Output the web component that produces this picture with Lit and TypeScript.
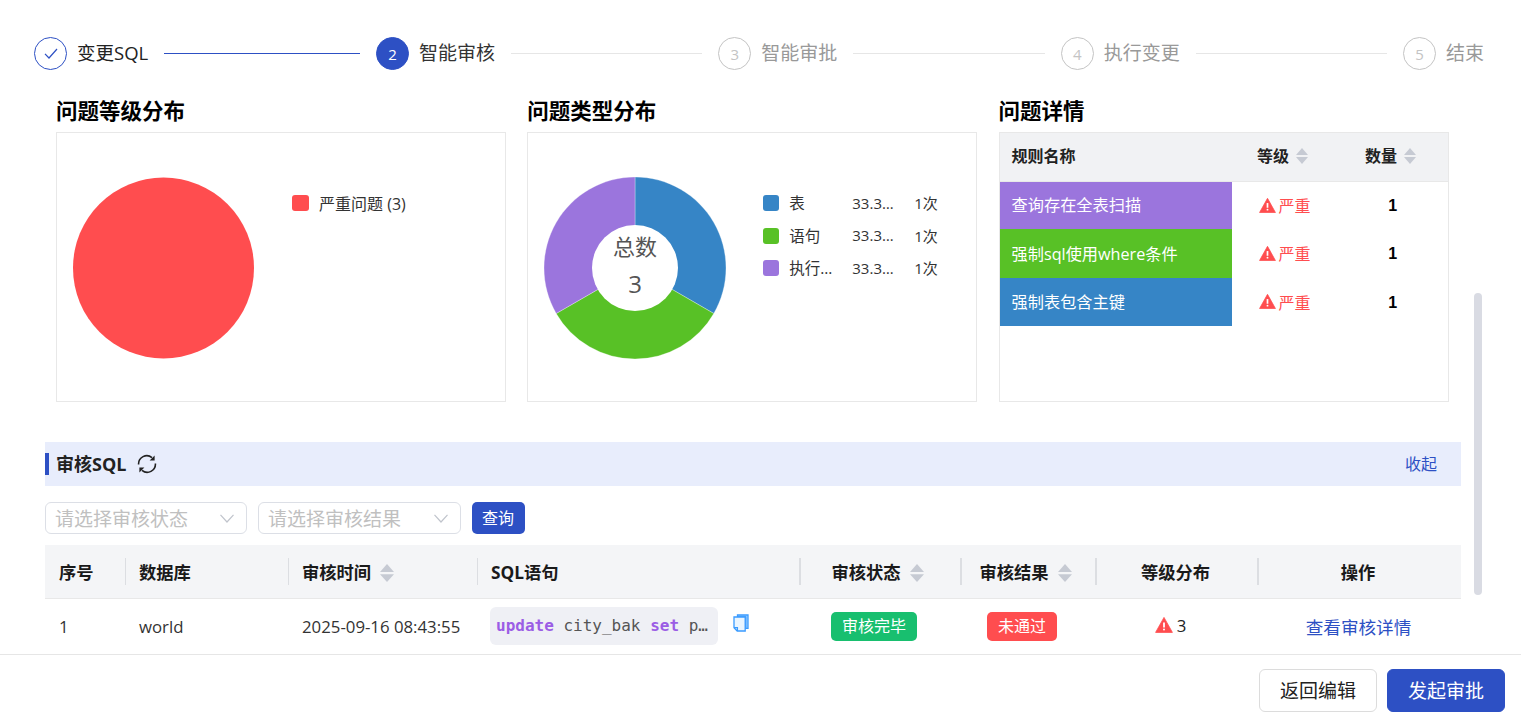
import { css, html, svg, LitElement } from "lit";
import { customElement } from "lit/decorators.js";

const BLUE = "#3685c6";
const GREEN = "#58c126";
const PURPLE = "#9b75dd";
const RED = "#ff4d4f";

const steps = [
  { label: "变更SQL", state: "done" },
  { label: "智能审核", state: "active" },
  { label: "智能审批", state: "todo" },
  { label: "执行变更", state: "todo" },
  { label: "结束", state: "todo" },
];

const typeLegend = [
  { name: "表", color: BLUE },
  { name: "语句", color: GREEN },
  { name: "执行计划", color: PURPLE },
];

const rules = [
  { name: "查询存在全表扫描", color: PURPLE },
  { name: "强制sql使用where条件", color: GREEN },
  { name: "强制表包含主键", color: BLUE },
];

const warnIcon = (size: number) => html`
  <svg class="warn" width=${size} height=${size} viewBox="0 0 18 18">
    <path d="M9 1.4 17.4 16.4H.6Z" fill="#ff4d4f" stroke="#ff4d4f" stroke-width=".8" stroke-linejoin="round" />
    <path d="M9 6.4v5" stroke="#fff" stroke-width="1.8" />
    <circle cx="9" cy="13.4" r="1" fill="#fff" />
  </svg>
`;

const sortIcon = () => html`<svg class="sort" viewBox="0 0 14 16" preserveAspectRatio="none">
    <path d="M7 0 14 7H0Z" fill="#c6cad3" />
    <path d="M7 16 0 9H14Z" fill="#c6cad3" />
  </svg>`;

const chevron = () => html`
  <svg width="14" height="9" viewBox="0 0 14 9" fill="none">
    <path d="M.5.8 7 8 13.5.8" stroke="#c0c4cc" stroke-width="1.2" />
  </svg>
`;

// clockwise slice of the donut, angles in degrees from twelve o'clock
function slice(from: number, to: number, color: string) {
  const r = 91;
  const rad = (deg: number) => ((deg - 90) * Math.PI) / 180;
  const x1 = 91 + r * Math.cos(rad(from));
  const y1 = 91 + r * Math.sin(rad(from));
  const x2 = 91 + r * Math.cos(rad(to));
  const y2 = 91 + r * Math.sin(rad(to));
  return svg`<path d="M91 91L${x1} ${y1}A${r} ${r} 0 0 1 ${x2} ${y2}Z" fill=${color} stroke="#fff" stroke-width=".3" />`;
}

@customElement("app-root")
export class AppRoot extends LitElement {
  renderStep(step: { label: string; state: string }, i: number) {
    return html`
      ${i > 0
        ? html`<span class="line ${step.state === "todo" ? "" : "on"}"></span>`
        : ""}
      <div class="step ${step.state}">
        <span class="dot">
          ${step.state === "done"
            ? html`<svg width="14" height="12" viewBox="0 0 14 12" fill="none">
                <path d="M1 5.8 5 10 13 1" stroke="#2d50c4" stroke-width="1.2" />
              </svg>`
            : i + 1}
        </span>
        <span class="step-label">${step.label}</span>
      </div>
    `;
  }

  renderCharts() {
    return html`
      <div class="charts">
        <div>
          <h3>问题等级分布</h3>
          <div class="box chart">
            <svg width="182" height="182" viewBox="0 0 182 182">
              <circle cx="90.5" cy="91" r="90.5" fill="#ff4d4f" />
            </svg>
            <div class="legend">
              <div class="legend-row">
                <i class="swatch wide" style="background:${RED}"></i>
                <span>严重问题 (3)</span>
              </div>
            </div>
          </div>
        </div>
        <div>
          <h3>问题类型分布</h3>
          <div class="box chart">
            <svg width="182" height="182" viewBox="0 0 182 182">
              ${slice(0, 120, BLUE)} ${slice(120, 240, GREEN)} ${slice(240, 360, PURPLE)}
              <circle cx="91" cy="91" r="43" fill="#fff" />
              <text x="91" y="78" class="total-label" text-anchor="middle">总数</text>
              <text x="91" y="116" class="total-num" text-anchor="middle">3</text>
            </svg>
            <div class="legend">
              ${typeLegend.map(
                (l) => html`
                  <div class="legend-row">
                    <i class="swatch" style="background:${l.color}"></i>
                    <span class="cut name">${l.name}</span>
                    <span class="cut pct">33.33%</span>
                    <span class="times">1次</span>
                  </div>
                `
              )}
            </div>
          </div>
        </div>
        <div>
          <h3>问题详情</h3>
          <div class="box">
            <table class="rules">
              <colgroup>
                <col style="width:232px" />
                <col style="width:106px" />
                <col />
              </colgroup>
              <thead>
                <tr>
                  <th class="left">规则名称</th>
                  <th>等级${sortIcon()}</th>
                  <th>数量${sortIcon()}</th>
                </tr>
              </thead>
              <tbody>
                ${rules.map(
                  (r) => html`
                    <tr>
                      <td class="rule" style="background:${r.color}">${r.name}</td>
                      <td class="low"><span class="sev">${warnIcon(17)}严重</span></td>
                      <td class="count low">1</td>
                    </tr>
                  `
                )}
              </tbody>
            </table>
          </div>
        </div>
      </div>
    `;
  }

  renderAudit() {
    return html`
      <div class="audit-head">
        <span class="audit-title">审核SQL</span>
        <svg width="20" height="20" viewBox="0 0 20 20" fill="none" stroke="#222" stroke-width="1.6">
          <path d="M1.6 10.5A8.2 8.2 0 0 1 15 3.6" />
          <path d="M18.4 9.5A8.2 8.2 0 0 1 5 16.4" />
          <path d="M17.6 1.6V6.6H12.6Z" fill="#222" stroke="none" />
          <path d="M2.4 18.4V13.4H7.4Z" fill="#222" stroke="none" />
        </svg>
        <a class="collapse">收起</a>
      </div>
      <div class="filters">
        <div class="select first"><span>请选择审核状态</span>${chevron()}</div>
        <div class="select"><span>请选择审核结果</span>${chevron()}</div>
        <button class="query"><span>查询</span></button>
      </div>
      <table class="audit">
        <colgroup>
          <col style="width:80px" />
          <col style="width:163px" />
          <col style="width:189px" />
          <col style="width:323px" />
          <col style="width:161px" />
          <col style="width:135px" />
          <col style="width:162px" />
          <col />
        </colgroup>
        <thead>
          <tr>
            <th class="left">序号</th>
            <th class="left">数据库</th>
            <th class="left">审核时间${sortIcon()}</th>
            <th class="left">SQL语句</th>
            <th class="pull">审核状态${sortIcon()}</th>
            <th class="pull">审核结果${sortIcon()}</th>
            <th class="pull-less">等级分布</th>
            <th class="pull-less">操作</th>
          </tr>
        </thead>
        <tbody>
          <tr>
            <td class="left">1</td>
            <td class="left">world</td>
            <td class="left">2025-09-16 08:43:55</td>
            <td class="left sql-td">
              <div class="sql-cell">
                <code class="sql"><b>update</b> city_bak <b>set</b> population = 1</code>
                <svg width="16" height="18" viewBox="0 0 16 18" fill="none" stroke="#3a9bff" stroke-width="1.3">
                  <path d="M4.5 1H15V14.4H12.8V3H4.5Z" fill="#a9d6ff" />
                  <path d="M1 3H12.2V17H4.2L1 13.8Z" fill="#eaf5ff" />
                  <path d="M1 13.6H4.4V17" />
                </svg>
              </div>
            </td>
            <td class="shift"><span class="tag pass">审核完毕</span></td>
            <td class="shift"><span class="tag fail">未通过</span></td>
            <td class="shift"><span class="dist">${warnIcon(18)}3</span></td>
            <td class="pull-less"><a class="link">查看审核详情</a></td>
          </tr>
        </tbody>
      </table>
    `;
  }

  render() {
    return html`
      <main>
        <div class="steps">${steps.map((s, i) => this.renderStep(s, i))}</div>
        ${this.renderCharts()} ${this.renderAudit()}
        <div class="scrollbar"></div>
      </main>
      <footer>
        <button class="btn">返回编辑</button>
        <button class="btn primary">发起审批</button>
      </footer>
    `;
  }

  static styles = css`
    :host {
      display: block;
      height: 720px;
      overflow: hidden;
      background: #fff;
      color: #333;
      font-family: "Open Sans", "Noto Sans CJK SC", sans-serif;
      font-size: 16px;
    }

    main {
      position: relative;
      height: 654px;
      overflow: hidden;
      padding: 37px 60px 0 45px;
      box-sizing: border-box;
    }

    /* steps */
    .steps {
      display: flex;
      align-items: center;
      gap: 16px;
      margin: 0 -23px 0 -11px;
      height: 33px;
    }

    .step {
      display: flex;
      align-items: center;
      gap: 10px;
      font-size: 19px;
      white-space: nowrap;
    }

    .step-label {
      margin-bottom: 3px;
    }

    .dot {
      display: flex;
      align-items: center;
      justify-content: center;
      width: 33px;
      height: 33px;
      box-sizing: border-box;
      border-radius: 50%;
      border: 1px solid #c4c4c4;
      color: #c4c4c4;
      font-size: 15px;
    }

    .step.done .dot {
      border-color: #2d50c4;
    }

    .step.done .step-label {
      color: #222;
      font-size: 18.5px;
    }

    .step.active .dot {
      background: #2d50c4;
      border-color: #2d50c4;
      color: #fff;
    }

    .step.active .step-label {
      color: #333;
    }

    .step.todo .step-label {
      color: #999;
    }

    .line {
      flex: 1 1 0;
      height: 1px;
      background: #e6e6e6;
    }

    .line.on {
      flex-basis: 4.5px;
      background: #2d50c4;
    }

    /* chart row */
    .charts {
      display: grid;
      grid-template-columns: repeat(3, 450px);
      gap: 21.3px;
      margin: 27px 0 0 11px;
    }

    h3 {
      margin: 0 0 7px;
      height: 28px;
      line-height: 28px;
      font-size: 21.5px;
      font-weight: 700;
      color: #000;
    }

    .box {
      height: 270px;
      box-sizing: border-box;
      border: 1px solid #e8e8e8;
    }

    .chart {
      display: flex;
      align-items: flex-start;
      gap: 37px;
      padding: 44px 16px 0;
    }

    .total-label {
      font-size: 22px;
      fill: #555;
    }

    .total-num {
      font-size: 24px;
      fill: #555;
    }

    .legend {
      display: flex;
      flex-direction: column;
      gap: 10.5px;
      margin-top: 15px;
      font-size: 16px;
    }

    .legend-row {
      display: flex;
      align-items: center;
      height: 22px;
    }

    .legend-row > span {
      margin-bottom: 1px;
    }

    .swatch {
      flex: none;
      width: 16px;
      height: 16px;
      margin-right: 10px;
      border-radius: 3px;
    }

    .swatch.wide {
      width: 17px;
    }

    .cut {
      overflow: hidden;
      white-space: nowrap;
      text-overflow: ellipsis;
    }

    .name {
      width: 47px;
      margin-right: 16px;
      font-size: 15.5px;
    }

    .pct {
      width: 43px;
      margin-right: 19px;
      font-size: 15px;
    }

    .times {
      font-size: 15px;
    }

    /* rule table */
    table {
      width: 100%;
      border-collapse: collapse;
      table-layout: fixed;
    }

    .rules th {
      height: 48px;
      padding: 0 4px 3px 0;
      box-sizing: border-box;
      background: #f1f2f4;
      border-bottom: 1px solid #e8e8e8;
      font-size: 16px;
      color: #222;
      text-align: center;
    }

    .rules th.left {
      padding: 0 0 3px 12px;
      text-align: left;
    }

    .rules td {
      height: 48px;
      padding: 0;
      text-align: center;
    }

    .rules tr:nth-child(2) td {
      height: 49px;
    }

    .rules td.low {
      padding-top: 1px;
      box-sizing: border-box;
    }

    .rules td.rule {
      padding: 0 0 2px 12px;
      box-sizing: border-box;
      color: #fff;
      font-size: 16.2px;
      text-align: left;
      white-space: nowrap;
    }

    .sort {
      width: 12px;
      height: 16px;
      margin-left: 7px;
      vertical-align: -2px;
    }

    .sev {
      display: inline-flex;
      align-items: center;
      gap: 3px;
      color: #ff4d4f;
    }

    .count {
      color: #000;
      font-weight: 700;
      font-family: "Liberation Sans", sans-serif;
    }

    /* audit section */
    .audit-head {
      display: flex;
      align-items: center;
      gap: 11px;
      position: relative;
      height: 44px;
      margin-top: 40px;
      padding: 0 24px 0 11px;
      background: #e8edfc;
    }

    .audit-head::before {
      content: "";
      position: absolute;
      left: 0;
      top: 11px;
      width: 4px;
      height: 22px;
      background: #2d50c4;
    }

    .audit-title {
      margin-bottom: 3px;
      font-size: 18px;
      font-weight: 700;
      color: #222;
    }

    .collapse {
      margin: 0 0 2px auto;
      font-size: 16px;
      color: #2d50c4;
    }

    .filters {
      display: flex;
      align-items: center;
      gap: 11px;
      height: 32px;
      margin-top: 16px;
    }

    .select {
      display: flex;
      align-items: center;
      justify-content: space-between;
      width: 203px;
      height: 32px;
      box-sizing: border-box;
      padding: 0 12px 0 9px;
      border: 1px solid #dcdfe6;
      border-radius: 6px;
      color: #c0c0c0;
      font-size: 19px;
    }

    .select span {
      margin-bottom: 1px;
    }

    .select.first {
      width: 202px;
    }

    .query {
      width: 53px;
      height: 32px;
      padding: 0 1px 2px 0;
      border: 0;
      border-radius: 5px;
      background: #2d50c4;
      color: #fff;
      font: inherit;
    }

    .audit {
      margin-top: 11px;
    }

    .audit th {
      position: relative;
      height: 53px;
      padding: 0;
      background: #f4f5f7;
      border-bottom: 1px solid #e8e8e8;
      font-size: 17.3px;
      color: #1a1a1a;
      text-align: center;
    }

    .audit th + th::before {
      content: "";
      position: absolute;
      left: 0;
      top: 13px;
      height: 27px;
      width: 1px;
      background: #dcdee2;
    }

    .audit th:nth-child(n + 5)::before {
      left: -1px;
      width: 2px;
    }

    .audit th.pull {
      padding-right: 6px;
    }

    .audit th.pull-less {
      padding-right: 3px;
    }

    .audit .sort {
      width: 14px;
      height: 18px;
      margin-left: 9px;
      vertical-align: -3px;
    }

    .audit th.left,
    .audit td.left {
      padding-left: 14px;
      text-align: left;
    }

    .audit td {
      height: 55px;
      padding: 0;
      text-align: center;
      font-size: 16.8px;
      color: #333;
    }

    .audit td.sql-td {
      padding-left: 13px;
    }

    .audit td.shift {
      padding-right: 13px;
    }

    .audit td.pull-less {
      padding-right: 2px;
    }

    .sql-cell {
      display: flex;
      align-items: center;
      gap: 15px;
      margin-top: -1px;
    }

    .sql {
      display: block;
      width: 228px;
      height: 38px;
      box-sizing: border-box;
      flex: none;
      padding: 0 6px;
      overflow: hidden;
      border-radius: 6px;
      background: #eff0f5;
      color: #555;
      font: 16px/38px "DejaVu Sans Mono", monospace;
      white-space: nowrap;
      text-overflow: ellipsis;
    }

    .sql b {
      color: #9b5de5;
    }

    .sql-cell svg {
      margin-top: -6px;
    }

    .tag {
      display: inline-block;
      padding: 0 10.5px;
      height: 29px;
      line-height: 29px;
      border-radius: 5px;
      color: #fff;
      font-size: 16px;
    }

    .pass {
      background: #18bf6f;
    }

    .fail {
      background: #ff4d4f;
    }

    .dist {
      display: inline-flex;
      align-items: center;
      gap: 4px;
      color: #222;
    }

    .link {
      color: #2d50c4;
      font-size: 17.6px;
    }

    .scrollbar {
      position: absolute;
      top: 293px;
      right: 39px;
      width: 8px;
      height: 302px;
      border-radius: 4px;
      background: #d9dbe3;
    }

    footer {
      display: flex;
      justify-content: flex-end;
      gap: 10px;
      height: 66px;
      padding: 14px 16px 0 0;
      box-sizing: border-box;
      border-top: 1px solid #e6e6e6;
    }

    .btn {
      width: 118px;
      height: 43px;
      padding: 0 0 2px;
      border: 1px solid #dcdcdc;
      border-radius: 6px;
      background: #fff;
      color: #222;
      font: inherit;
      font-size: 19px;
    }

    .btn.primary {
      border-color: #2d50c4;
      background: #2d50c4;
      color: #fff;
    }
  `;
}

declare global {
  interface HTMLElementTagNameMap {
    "app-root": AppRoot;
  }
}
